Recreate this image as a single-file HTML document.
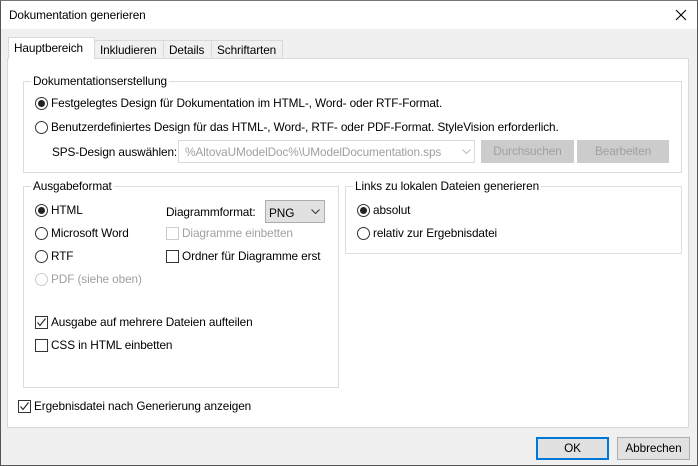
<!DOCTYPE html>
<html><head><style>
*{box-sizing:border-box;margin:0;padding:0}
body{width:698px;height:466px;overflow:hidden;background:#f0f0f0;font-family:"Liberation Sans",sans-serif;font-size:11.8px;letter-spacing:-0.1px;color:#000;position:relative}
.a{position:absolute;white-space:nowrap}
.win{position:absolute;left:0;top:0;width:698px;height:466px;border:1px solid #555;border-top-color:#777}
.title{position:absolute;left:1px;top:1px;width:696px;height:28px;background:#fff}
.panel{position:absolute;left:7px;top:58px;width:682px;height:370px;background:#fff;border:1px solid #d9d9d9}
.tab{position:absolute;top:40px;height:19px;border:1px solid #d9d9d9;background:#f0f0f0;padding:2px 4px 0 5px}
.grp{position:absolute;border:1px solid #dcdcdc}
.lg{position:absolute;background:#fff;padding:0 2px;top:-8px;left:7px;line-height:14px}
.r{position:absolute;width:13px;height:13px;border:1px solid #333;border-radius:50%;background:#fff}
.r.on::after{content:"";position:absolute;left:2px;top:2px;width:7px;height:7px;border-radius:50%;background:#222}
.c{position:absolute;width:13px;height:13px;border:1px solid #333;background:#fff}
.btn{position:absolute;height:23px;border:1px solid #adadad;background:#e1e1e1;text-align:center;line-height:21px}
.dis{color:#a0a0a0}
</style></head><body>
<div class="win"></div>
<div class="title"></div>
<div class="a" style="left:9px;top:8px">Dokumentation generieren</div>
<svg class="a" style="left:675px;top:9px" width="12" height="12"><path d="M1 1L11 11M11 1L1 11" stroke="#000" stroke-width="1.1"/></svg>

<div class="panel"></div>
<div class="tab" style="left:94px;width:70px">Inkludieren</div>
<div class="tab" style="left:163px;width:49px">Details</div>
<div class="tab" style="left:211px;width:72px">Schriftarten</div>
<div class="tab" style="left:8px;top:37px;height:22px;width:87px;background:#fff;border-bottom:none;padding-top:3px">Hauptbereich</div>

<div class="grp" style="left:23px;top:81px;width:659px;height:92px"><div class="lg">Dokumentationserstellung</div></div>
<div class="r on" style="left:35px;top:97px"></div>
<div class="a" style="left:51px;top:96px">Festgelegtes Design für Dokumentation im HTML-, Word- oder RTF-Format.</div>
<div class="r" style="left:35px;top:121px"></div>
<div class="a" style="left:51px;top:120px">Benutzerdefiniertes Design für das HTML-, Word-, RTF- oder PDF-Format. StyleVision erforderlich.</div>
<div class="a" style="left:52px;top:145px">SPS-Design auswählen:</div>
<div class="a dis" style="left:178px;top:140px;width:297px;height:23px;border:1px solid #d9d9d9;padding:4px 0 0 6px;background:#fff">%AltovaUModelDoc%\UModelDocumentation.sps</div>
<svg class="a" style="left:462px;top:149px" width="9" height="6"><path d="M0.5 0.5L4.5 4.5L8.5 0.5" stroke="#bbb" fill="none"/></svg>
<div class="btn dis" style="left:481px;top:140px;width:93px;border-color:#ccc;background:#ccc">Durchsuchen</div>
<div class="btn dis" style="left:577px;top:140px;width:92px;border-color:#ccc;background:#ccc">Bearbeiten</div>

<div class="grp" style="left:23px;top:186px;width:316px;height:202px"><div class="lg">Ausgabeformat</div></div>
<div class="r on" style="left:35px;top:204px"></div><div class="a" style="left:51px;top:203px">HTML</div>
<div class="r" style="left:35px;top:227px"></div><div class="a" style="left:51px;top:226px">Microsoft Word</div>
<div class="r" style="left:35px;top:250px"></div><div class="a" style="left:51px;top:249px">RTF</div>
<div class="r" style="left:35px;top:273px;border-color:#ccc"></div><div class="a dis" style="left:51px;top:272px">PDF (siehe oben)</div>
<div class="a" style="left:166px;top:205px">Diagrammformat:</div>
<div class="a" style="left:265px;top:200px;width:60px;height:23px;border:1px solid #adadad;background:#e1e1e1;padding:5px 0 0 3px">PNG</div>
<svg class="a" style="left:311px;top:209px" width="9" height="6"><path d="M0.5 0.5L4.5 4.5L8.5 0.5" stroke="#333" fill="none"/></svg>
<div class="c" style="left:166px;top:227px;border-color:#ccc"></div><div class="a dis" style="left:182px;top:226px">Diagramme einbetten</div>
<div class="c" style="left:166px;top:250px"></div><div class="a" style="left:182px;top:249px">Ordner für Diagramme erst</div>
<div class="c" style="left:35px;top:316px"></div>
<svg class="a" style="left:36px;top:317px" width="11" height="11"><path d="M1.5 5.5L4 8.5L9.5 1.5" stroke="#222" fill="none" stroke-width="1.1"/></svg>
<div class="a" style="left:51px;top:315px">Ausgabe auf mehrere Dateien aufteilen</div>
<div class="c" style="left:35px;top:339px"></div><div class="a" style="left:51px;top:338px">CSS in HTML einbetten</div>

<div class="grp" style="left:345px;top:186px;width:337px;height:68px"><div class="lg">Links zu lokalen Dateien generieren</div></div>
<div class="r on" style="left:357px;top:204px"></div><div class="a" style="left:373px;top:203px">absolut</div>
<div class="r" style="left:357px;top:227px"></div><div class="a" style="left:373px;top:226px">relativ zur Ergebnisdatei</div>

<div class="c" style="left:18px;top:400px"></div>
<svg class="a" style="left:19px;top:401px" width="11" height="11"><path d="M1.5 5.5L4 8.5L9.5 1.5" stroke="#222" fill="none" stroke-width="1.1"/></svg>
<div class="a" style="left:34px;top:399px">Ergebnisdatei nach Generierung anzeigen</div>

<div class="btn" style="left:536px;top:437px;width:73px;border:2px solid #0078d7;line-height:19px">OK</div>
<div class="btn" style="left:617px;top:437px;width:73px">Abbrechen</div>
</body></html>
